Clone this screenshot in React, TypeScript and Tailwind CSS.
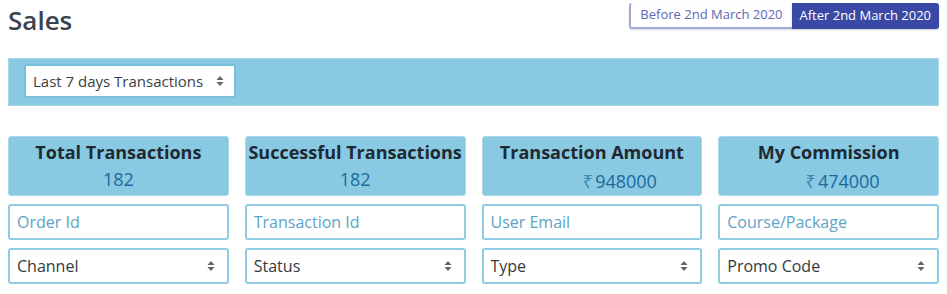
import React from "react";

const font = { fontFamily: '"Open Sans", "Noto Sans", sans-serif' };

const Arrows = () => (
  <svg width="8" height="12" viewBox="0 0 8 12" className="shrink-0">
    <path d="M4 1 L7.5 5 H0.5 Z" fill="#5f6670" />
    <path d="M4 11 L7.5 7 H0.5 Z" fill="#5f6670" />
  </svg>
);

const SelectBox = ({ label }: { label: string }) => (
  <div className="flex h-9 items-center justify-between rounded-[3px] border-2 border-[#8fcbe2] bg-white pl-[7px] pr-3 text-[16px] text-[#333a40]">
    <span>{label}</span>
    <Arrows />
  </div>
);

const InputBox = ({ placeholder }: { placeholder: string }) => (
  <div className="flex h-9 items-center rounded-[3px] border-2 border-[#8fcbe2] bg-white pl-[7px] text-[16px] text-[#5ca3c9]">
    {placeholder}
  </div>
);

interface Card {
  title: string;
  value: string;
  rupee?: boolean;
  shift?: string;
  input: string;
  select: string;
}

const cards: Card[] = [
  { title: "Total Transactions", value: "182", input: "Order Id", select: "Channel" },
  { title: "Successful Transactions", value: "182", input: "Transaction Id", select: "Status" },
  { title: "Transaction Amount", value: "948000", rupee: true, shift: "pl-[56px]", input: "User Email", select: "Type" },
  { title: "My Commission", value: "474000", rupee: true, shift: "pl-[28px]", input: "Course/Package", select: "Promo Code" },
];

export default function App() {
  return (
    <div className="min-h-screen bg-white px-2" style={font}>
      {/* header row */}
      <div className="flex items-start justify-between">
        <h1 className="pt-[2px] text-[26px] font-semibold leading-[36px] text-[#3b4350]">Sales</h1>
        <div className="mt-[3px] flex h-[26px] text-[13px]">
          <button className="rounded-l-[3px] border-b-2 border-l-2 border-[#a3aadb] bg-white px-[9px] text-[#5e66b6] shadow-[0_1px_2px_rgba(0,0,0,0.15)]">
            Before 2nd March 2020
          </button>
          <button className="rounded-r-[3px] bg-[#3a48a6] px-[8px] text-white shadow-[0_1px_2px_rgba(0,0,0,0.2)]">
            After 2nd March 2020
          </button>
        </div>
      </div>

      {/* filter bar */}
      <div className="mt-[20px] flex h-12 items-start border border-[#a9d8ea] bg-[#89c9e2] px-[15px] pt-[5px]">
        <div className="flex h-[34px] w-[212px] items-center justify-between rounded-[3px] border-2 border-[#78bfdc] bg-white pl-[7px] pr-[10px] text-[15px] text-[#3a4048]">
          <span>Last 7 days Transactions</span>
          <Arrows />
        </div>
      </div>

      {/* cards */}
      <div className="mt-[30px] grid grid-cols-4 gap-4">
        {cards.map((c) => (
          <div key={c.title} className="flex flex-col gap-2">
            <div className="flex h-[60px] flex-col items-center rounded-[3px] border border-[#a9d8ea] bg-[#89c9e2] pt-[2px]">
              <div className="text-[18px] font-bold leading-[26px] text-[#1d2a33]">{c.title}</div>
              {c.rupee ? (
                <div className={`mt-[3px] flex items-baseline text-[18px] leading-[26px] text-[#1b6a9c] ${c.shift}`}>
                  <span className="mr-[2px] text-[#3d87b4]">₹</span>
                  {c.value}
                </div>
              ) : (
                <div className="mt-[2px] text-[18px] leading-[24px] text-[#1b6a9c]">{c.value}</div>
              )}
            </div>
            <InputBox placeholder={c.input} />
            <SelectBox label={c.select} />
          </div>
        ))}
      </div>
    </div>
  );
}
